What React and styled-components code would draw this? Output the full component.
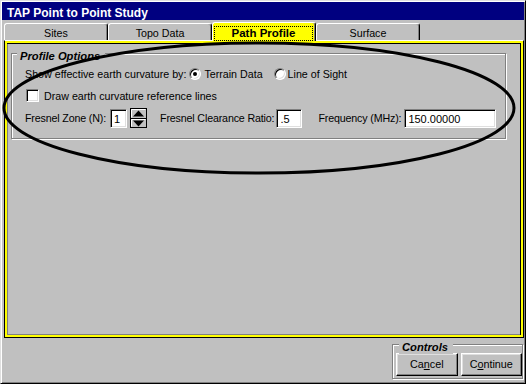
import React from "react";
import styled, { createGlobalStyle } from "styled-components";

const Global = createGlobalStyle`
  html, body { margin: 0; padding: 0; background: #c0c0c0; }
  body {
    font-family: "Liberation Sans", Arial, sans-serif;
    font-size: 10.7px;
    color: #000;
  }
  * { box-sizing: border-box; }
`;

const Window = styled.div`
  position: relative;
  width: 526px;
  height: 384px;
  background: #c0c0c0;
  border: 1px solid;
  border-color: #dfdfdf #000 #000 #dfdfdf;
  box-shadow: inset 1px 1px 0 #fff, inset -1px -1px 0 #808080;
  padding: 1px;
  display: flex;
  flex-direction: column;
  overflow: hidden;
`;

const TitleBar = styled.div`
  flex: none;
  height: 18px;
  background: #000080;
  color: #fff;
  font-weight: 700;
  font-size: 12px;
  line-height: 14px;
  padding: 4px 0 0 5px;
  white-space: nowrap;
`;

const TabRow = styled.div`
  flex: none;
  height: 20px;
  display: flex;
  align-items: flex-end;
  padding-left: 2px;
  position: relative;
  z-index: 2;
`;

const Tab = styled.div`
  position: relative;
  width: 104px;
  height: ${(p) => (p.$active ? 19 : 17)}px;
  margin-bottom: ${(p) => (p.$active ? -1 : 0)}px;
  background: ${(p) => (p.$active ? "#ffff00" : "#c0c0c0")};
  border-top: 1px solid #fff;
  border-left: 1px solid #fff;
  border-right: 1px solid #000;
  border-radius: 3px 3px 0 0;
  box-shadow: inset -1px 0 0 #808080;
  text-align: center;
  font-weight: ${(p) => (p.$active ? 700 : 400)};
  font-size: ${(p) => (p.$active ? 11.5 : 10.7)}px;
  line-height: 14px;
  padding: ${(p) => (p.$active ? "3px 2px 0 1px" : "2px 0 0 0")};
  z-index: ${(p) => (p.$active ? 2 : 1)};
`;

const FocusRect = styled.div`
  height: 15px;
  border: 1px dotted #000;
  line-height: 13px;
`;

const Panel = styled.div`
  flex: none;
  height: 298px;
  margin-left: 2px;
  border: 1px solid;
  border-color: #fff #000 #000 #000;
  box-shadow: inset 0 0 0 2px #ffff00, inset 0 3px 0 0 #000, inset -3px 0 0 0 #000,
    inset 3px 0 0 0 #808080, inset 0 -3px 0 0 #808080;
  padding: 12px 0 0 6px;
`;

const GroupBox = styled.div`
  position: relative;
  width: ${(p) => p.$w}px;
  height: ${(p) => p.$h}px;
  border: 1px solid #808080;
  box-shadow: inset 1px 1px 0 #fff, 1px 1px 0 #fff;
  padding: ${(p) => p.$pad};
`;

const Legend = styled.span`
  position: absolute;
  top: -4px;
  left: ${(p) => p.$left}px;
  padding: 0 5px 0 3px;
  background: #c0c0c0;
  font-weight: 700;
  font-style: italic;
  font-size: 11.2px;
  line-height: 13px;
  white-space: nowrap;
`;

const Row = styled.div`
  display: flex;
  align-items: center;
  height: ${(p) => p.$h}px;
  margin-top: ${(p) => p.$mt || 0}px;
  margin-left: ${(p) => p.$ml || 0}px;
  white-space: nowrap;
`;

const Label = styled.span`
  line-height: 14px;
  margin-left: ${(p) => p.$ml || 0}px;
  letter-spacing: ${(p) => (p.$tight ? "-0.16px" : "normal")};
`;

const Radio = styled.span`
  flex: none;
  width: 12px;
  height: 12px;
  margin-left: ${(p) => p.$ml || 0}px;
  border-radius: 50%;
  border: 1px solid;
  border-color: #808080 #fff #fff #808080;
  background: #fff;
  box-shadow: inset 1px 1px 0 #000, inset -1px -1px 0 #dfdfdf;
  display: flex;
  align-items: center;
  justify-content: center;
  &::after {
    content: "";
    display: ${(p) => (p.$checked ? "block" : "none")};
    width: 4px;
    height: 4px;
    border-radius: 50%;
    background: #000;
  }
`;

const Check = styled.span`
  flex: none;
  width: 13px;
  height: 13px;
  background: #fff;
  border: 1px solid;
  border-color: #808080 #fff #fff #808080;
  box-shadow: inset 1px 1px 0 #000, inset -1px -1px 0 #dfdfdf;
`;

const Field = styled.div`
  flex: none;
  width: ${(p) => p.$w}px;
  height: 19px;
  margin-left: ${(p) => p.$ml || 0}px;
  background: #fff;
  border: 1px solid;
  border-color: #808080 #fff #fff #808080;
  box-shadow: inset 1px 1px 0 #000, inset -1px -1px 0 #dfdfdf;
  padding: 1px 0 0 3px;
  line-height: 16px;
  font-size: 11px;
`;

const SpinBox = styled.svg`
  flex: none;
  display: block;
  margin-left: ${(p) => p.$ml || 0}px;
`;

const Footer = styled.div`
  flex: 1;
  display: flex;
  justify-content: flex-end;
  align-items: flex-start;
  padding: 6px 1px 0 0;
`;

const ButtonRow = styled.div`
  display: flex;
  gap: 3px;
`;

const Button = styled.div`
  width: 62px;
  height: 23px;
  border: 1px solid;
  border-color: #fff #000 #000 #fff;
  box-shadow: inset -1px -1px 0 #808080, inset 1px 1px 0 #dfdfdf;
  display: flex;
  align-items: center;
  justify-content: center;
  font-size: 10.8px;
  line-height: 14px;
  padding-bottom: 1px;
`;

const Overlay = styled.svg`
  position: absolute;
  left: -1px;
  top: -1px;
  pointer-events: none;
  z-index: 5;
`;

function Spinner({ ml }) {
  return (
    <SpinBox $ml={ml} width="17" height="20" viewBox="0 0 17 20">
      <rect x="0.5" y="0.5" width="16" height="19" fill="#c0c0c0" stroke="#000" />
      <path d="M1.5 9.5V1.5H15.5" stroke="#fff" fill="none" />
      <path d="M1.5 18.5V11.5H15.5" stroke="#fff" fill="none" />
      <line x1="1" y1="10.5" x2="16" y2="10.5" stroke="#000" />
      <path d="M8.5 2.5L14 8.5H3Z" fill="#000" />
      <path d="M3 12.5H14L8.5 18.5Z" fill="#000" />
    </SpinBox>
  );
}

export default function App() {
  return (
    <>
      <Global />
      <Window>
        <TitleBar>TAP Point to Point Study</TitleBar>
        <TabRow>
          <Tab>Sites</Tab>
          <Tab>Topo Data</Tab>
          <Tab $active>
            <FocusRect>Path Profile</FocusRect>
          </Tab>
          <Tab>Surface</Tab>
        </TabRow>
        <Panel>
          <GroupBox $w={495} $h={86} $pad="13px 0 0 13px">
            <Legend $left={5}>Profile Options</Legend>
            <Row $h={14}>
              <Label>Show effective earth curvature by:</Label>
              <Radio $checked $ml={3} />
              <Label $ml={3}>Terrain Data</Label>
              <Radio $ml={11} />
              <Label $ml={2}>Line of Sight</Label>
            </Row>
            <Row $h={13} $mt={8} $ml={1}>
              <Check />
              <Label $ml={5}>Draw earth curvature reference lines</Label>
            </Row>
            <Row $h={20} $mt={6}>
              <Label $tight>Fresnel Zone (N):</Label>
              <Field $w={17} $ml={4}>1</Field>
              <Spinner ml={3} />
              <Label $tight $ml={13}>Fresnel Clearance Ratio:</Label>
              <Field $w={26} $ml={2}>.5</Field>
              <Label $tight $ml={16}>Frequency (MHz):</Label>
              <Field $w={92} $ml={3}>150.00000</Field>
            </Row>
          </GroupBox>
        </Panel>
        <Footer>
          <GroupBox $w={131} $h={35} $pad="8px 0 0 3px">
            <Legend $left={6}>Controls</Legend>
            <ButtonRow>
              <Button>
                <span>
                  Ca<u>n</u>cel
                </span>
              </Button>
              <Button>
                <span>
                  C<u>o</u>ntinue
                </span>
              </Button>
            </ButtonRow>
          </GroupBox>
        </Footer>
        <Overlay width="526" height="384" viewBox="0 0 526 384">
          <ellipse cx="259" cy="108" rx="255" ry="65" fill="none" stroke="#000" strokeWidth="3" />
        </Overlay>
      </Window>
    </>
  );
}
